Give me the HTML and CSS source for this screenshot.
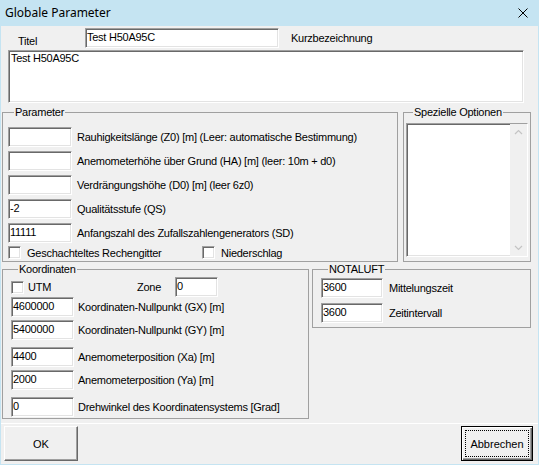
FILE: index.html
```html
<!DOCTYPE html>
<html lang="de">
<head>
<meta charset="utf-8">
<title>Globale Parameter</title>
<link rel="stylesheet" href="styles.css">
</head>
<body>
<div class="window">
  <div class="titlebar">
    <span class="title">Globale Parameter</span>
    <svg class="close" width="10" height="10" viewBox="0 0 10 10"><path d="M0.5 0.5 L9.5 9.5 M9.5 0.5 L0.5 9.5" stroke="#000" stroke-width="1" fill="none"/></svg>
  </div>
  <div class="client">
    <div class="title-row">
      <span class="titel-lbl">Titel</span>
      <div class="edit titel-edit">Test H50A95C</div>
      <span class="kurz-lbl">Kurzbezeichnung</span>
    </div>
    <div class="edit memo">Test H50A95C</div>

    <div class="mid-row">
      <fieldset class="group param">
        <legend>Parameter</legend>
        <div class="row"><div class="edit"></div><span class="lbl">Rauhigkeitslänge (Z0) [m] (Leer: automatische Bestimmung)</span></div>
        <div class="row"><div class="edit"></div><span class="lbl">Anemometerhöhe über Grund (HA) [m] (leer: 10m + d0)</span></div>
        <div class="row"><div class="edit"></div><span class="lbl">Verdrängungshöhe (D0) [m] (leer 6z0)</span></div>
        <div class="row"><div class="edit">-2</div><span class="lbl">Qualitätsstufe (QS)</span></div>
        <div class="row"><div class="edit">11111</div><span class="lbl">Anfangszahl des Zufallszahlengenerators (SD)</span></div>
        <div class="check-row">
          <span class="check-item wide"><span class="check"></span><span>Geschachteltes Rechengitter</span></span>
          <span class="check-item"><span class="check"></span><span>Niederschlag</span></span>
        </div>
      </fieldset>
      <fieldset class="group special">
        <legend>Spezielle Optionen</legend>
        <div class="edit listbox">
          <div class="scrollbar">
            <svg width="17" height="17" viewBox="0 0 17 17"><path d="M5 10 L8.5 6.5 L12 10" stroke="#c4c4c4" stroke-width="1.2" fill="none"/></svg>
            <svg width="17" height="17" viewBox="0 0 17 17"><path d="M5 7 L8.5 10.5 L12 7" stroke="#c4c4c4" stroke-width="1.2" fill="none"/></svg>
          </div>
        </div>
      </fieldset>
    </div>

    <div class="low-row">
      <fieldset class="group koord">
        <legend>Koordinaten</legend>
        <div class="row utm-row">
          <span class="check-item utm"><span class="check"></span><span>UTM</span></span>
          <span class="zone-lbl">Zone</span>
          <div class="edit zone-edit">0</div>
        </div>
        <div class="row tight"><div class="edit">4600000</div><span class="lbl">Koordinaten-Nullpunkt (GX) [m]</span></div>
        <div class="row"><div class="edit">5400000</div><span class="lbl">Koordinaten-Nullpunkt (GY) [m]</span></div>
        <div class="row spaced"><div class="edit">4400</div><span class="lbl">Anemometerposition (Xa) [m]</span></div>
        <div class="row"><div class="edit">2000</div><span class="lbl">Anemometerposition (Ya) [m]</span></div>
        <div class="row spaced"><div class="edit">0</div><span class="lbl">Drehwinkel des Koordinatensystems [Grad]</span></div>
      </fieldset>
      <fieldset class="group notaluft">
        <legend>NOTALUFT</legend>
        <div class="row"><div class="edit">3600</div><span class="lbl">Mittelungszeit</span></div>
        <div class="row"><div class="edit">3600</div><span class="lbl">Zeitintervall</span></div>
      </fieldset>
    </div>

    <div class="button-bar">
      <button class="btn">OK</button>
      <button class="btn default"><span class="focus">Abbrechen</span></button>
    </div>
  </div>
</div>
</body>
</html>
```
FILE: styles.css
```css
* { box-sizing: border-box; }
html, body { margin: 0; padding: 0; }
body {
  width: 539px;
  height: 465px;
  overflow: hidden;
  background: #f0f0f0;
  font-family: "Liberation Sans", Arial, sans-serif;
  font-size: 11px;
  letter-spacing: -0.25px;
  color: #000;
}
.window {
  width: 539px;
  height: 465px;
  display: flex;
  flex-direction: column;
  background: #f0f0f0;
  border: 1px solid #c5e4f2;
  border-top: 0;
}
.titlebar {
  height: 26px;
  flex: none;
  display: flex;
  align-items: center;
  padding-left: 4px;
  background: #c5e4f2;
}
.title {
  font-family: "Noto Sans", "Liberation Sans", sans-serif;
  font-size: 12px;
  line-height: 16px;
  letter-spacing: 0;
}
.close { margin-left: auto; margin-right: 10px; }
.client {
  flex: 1;
  display: flex;
  flex-direction: column;
}

/* sunken edit control */
.edit {
  background: #fff;
  height: 20px;
  line-height: 16px;
  padding: 0 1px;
  border: 1px solid;
  border-color: #a0a0a0 #fff #fff #a0a0a0;
  box-shadow: inset 1px 1px #696969, inset -1px -1px #e3e3e3;
  white-space: nowrap;
  overflow: hidden;
}

.title-row {
  display: flex;
  height: 20px;
  margin-top: 2px;
  padding-left: 17px;
  align-items: center;
}
.titel-lbl {
  width: 67px;
  align-self: flex-end;
  line-height: 13px;
}
.titel-edit { width: 194px; }
.kurz-lbl { margin-left: 12px; line-height: 13px; }

.memo {
  width: 516px;
  height: 53px;
  margin: 2px 0 0 7px;
  padding: 1px 2px;
  line-height: 13px;
}

.group {
  margin: 0;
  padding: 0;
  min-width: 0;
  border: 1px solid #a0a0a0;
}
.group > legend {
  padding: 0 1px;
  margin-left: 7px;
  font-size: 11px;
  line-height: 12px;
}

.row {
  display: flex;
  align-items: center;
  height: 20px;
}
.lbl { white-space: nowrap; }

.mid-row {
  display: flex;
  gap: 5px;
  margin-top: 3px;
  padding-left: 1px;
}
.param {
  width: 396px;
  height: 156px;
  padding: 9px 5px 0 5px;
}
.param > legend { margin-left: 6px; }
.param .row { gap: 5px; }
.param .row + .row { margin-top: 4px; }
.param .edit { width: 64px; }

.check-row {
  display: flex;
  align-items: center;
  height: 15px;
  margin-top: 2px;
}
.check-item {
  display: flex;
  align-items: center;
  gap: 6px;
}
.check-item.wide { width: 194px; }
.check {
  width: 13px;
  height: 13px;
  flex: none;
  background: #fff;
  border: 1px solid;
  border-color: #a0a0a0 #fff #fff #a0a0a0;
  box-shadow: inset 1px 1px #696969, inset -1px -1px #e3e3e3;
}

.special {
  width: 128px;
  height: 156px;
  padding: 5px 2px 0 2px;
}
.listbox {
  width: 122px;
  height: 134px;
  padding: 0;
  display: flex;
  justify-content: flex-end;
}
.scrollbar {
  width: 17px;
  background: #f0f0f0;
  display: flex;
  flex-direction: column;
  justify-content: space-between;
}
.scrollbar svg { display: block; }

.low-row {
  display: flex;
  align-items: flex-start;
  gap: 3px;
  margin-top: 1px;
  padding-left: 1px;
}
.koord {
  width: 307px;
  height: 156px;
  padding: 2px 8px 0 8px;
}
.koord .row { gap: 4px; margin-top: 3px; }
.koord .row.utm-row { margin-top: 0; gap: 0; }
.koord .row.tight { margin-top: 0; }
.koord .row.spaced { margin-top: 7px; }
.koord .edit { width: 63px; }
.check-item.utm { width: 126px; gap: 4px; }
.zone-lbl { width: 38px; }
.koord .edit.zone-edit { width: 43px; }

.notaluft {
  width: 219px;
  height: 65px;
  padding: 3px 8px 0 8px;
}
.notaluft > legend { margin-left: 7px; }
.notaluft .row { gap: 6px; }
.notaluft .row + .row { margin-top: 5px; }
.notaluft .edit { width: 62px; }

.button-bar {
  display: flex;
  justify-content: space-between;
  margin-top: 4px;
  padding: 2px 5px 0 3px;
  border-top: 1px solid #fff;
}
.btn {
  font: inherit;
  color: #000;
  width: 74px;
  height: 35px;
  padding: 0;
  background: #f0f0f0;
  border: 1px solid;
  border-color: #fff #696969 #696969 #fff;
  box-shadow: inset -1px -1px #a0a0a0, inset 1px 1px #f0f0f0;
}
.btn.default {
  width: 72px;
  border-color: #000;
  box-shadow: inset 1px 1px #fff, inset -1px -1px #696969, inset -2px -2px #a0a0a0;
  padding: 3px;
}
.focus {
  display: flex;
  align-items: center;
  justify-content: center;
  height: 100%;
  border: 1px dotted #000;
}
```
